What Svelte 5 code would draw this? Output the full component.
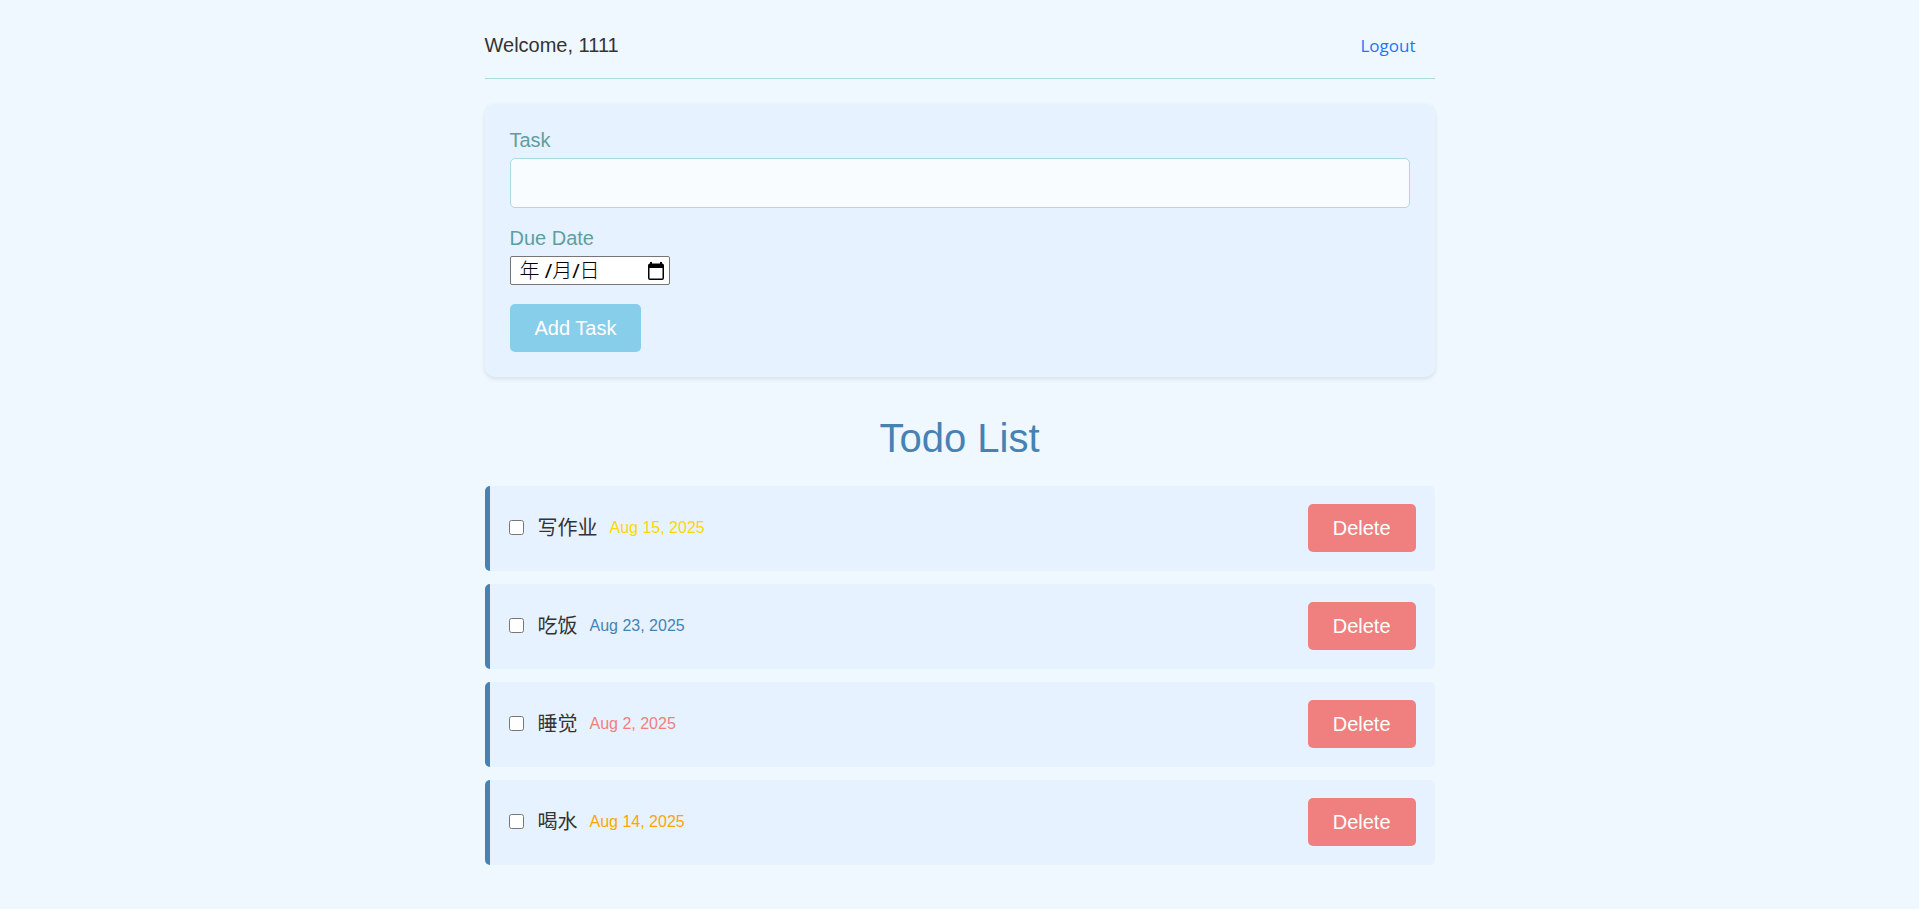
<script>
  let task = $state('');
  let due = $state('年 /月/日');
  let todos = $state([
    { id: 1, title: '写作业', date: 'Aug 15, 2025', urgency: 'soon', done: false },
    { id: 2, title: '吃饭', date: 'Aug 23, 2025', urgency: 'later', done: false },
    { id: 3, title: '睡觉', date: 'Aug 2, 2025', urgency: 'overdue', done: false },
    { id: 4, title: '喝水', date: 'Aug 14, 2025', urgency: 'today', done: false }
  ]);

  function addTask(event) {
    event.preventDefault();
    if (!task.trim()) return;
    todos.push({ id: Date.now(), title: task, date: due, urgency: 'later', done: false });
    task = '';
  }

  function remove(id) {
    todos = todos.filter((t) => t.id !== id);
  }
</script>

<main class="page">
  <header class="top">
    <span>Welcome, 1111</span>
    <a class="logout" href="#logout">Logout</a>
  </header>

  <form class="card" onsubmit={addTask}>
    <label for="task">Task</label>
    <input id="task" class="task-input" type="text" bind:value={task} />
    <label for="due">Due Date</label>
    <div class="date-field">
      <input id="due" type="text" bind:value={due} />
      <button type="button" class="picker" aria-label="Show date picker">
        <svg width="16" height="18" viewBox="0 0 16 18" aria-hidden="true">
          <path fill="#000" fill-rule="evenodd" d="M2 0h2v1.500h8V0h2v1.500a2 2 0 0 1 2 2V16a2 2 0 0 1-2 2H2a2 2 0 0 1-2-2V3.500a2 2 0 0 1 2-2zM1.500 6v10.500h13V6z" />
        </svg>
      </button>
    </div>
    <button class="btn add" type="submit">Add Task</button>
  </form>

  <h1>Todo List</h1>

  <ul class="list">
    {#each todos as todo (todo.id)}
      <li>
        <input id="todo-{todo.id}" type="checkbox" bind:checked={todo.done} />
        <label for="todo-{todo.id}">{todo.title}</label>
        <span class="date {todo.urgency}">{todo.date}</span>
        <button class="btn delete" type="button" onclick={() => remove(todo.id)}>Delete</button>
      </li>
    {/each}
  </ul>
</main>

<style>
  :global(body) {
    background: #f0f8ff;
  }
  .page {
    box-sizing: border-box;
    max-width: 990px;
    margin: 0 auto;
    padding: 20px;
    font-family: "Liberation Sans", "Noto Sans CJK SC", sans-serif;
    font-size: 20px;
    line-height: 30px;
    color: #333;
  }
  .top {
    display: flex;
    justify-content: space-between;
    align-items: center;
    padding: 10px 0 18px;
    border-bottom: 1px solid #add8e6;
    margin-bottom: 25px;
  }
  .logout {
    margin-right: 19px;
    padding-top: 2px;
    font-family: "Open Sans", "Noto Sans", sans-serif;
    font-size: 17px;
    line-height: 28px;
    color: #1677ff;
    text-decoration: none;
  }
  .card {
    display: flex;
    flex-direction: column;
    align-items: flex-start;
    padding: 21px 25px 25px;
    border-radius: 10px;
    background: #e6f2ff;
    box-shadow: 0 2px 5px rgba(0, 0, 0, 0.1);
  }
  .card label {
    color: #5f9ea0;
    margin-bottom: 3px;
  }
  .task-input {
    box-sizing: border-box;
    width: 100%;
    height: 50px;
    margin: 0 0 15px;
    padding: 12px;
    border: 1px solid #add8e6;
    border-radius: 5px;
    background: #f8fcff;
    font: inherit;
    color: inherit;
  }
  .date-field {
    box-sizing: border-box;
    display: flex;
    align-items: center;
    width: 160px;
    height: 29px;
    margin-bottom: 19px;
    padding: 0 5px 0 9px;
    border: 1px solid #767676;
    border-radius: 2px;
    background: #fff;
  }
  .date-field input {
    flex: 1;
    min-width: 0;
    height: 25px;
    padding: 0 0 2px;
    border: 0;
    outline: 0;
    background: none;
    font-family: "Noto Sans", "Noto Sans CJK SC Light", "Noto Sans CJK SC", sans-serif;
    font-size: 20px;
    color: #000;
  }
  .picker {
    display: flex;
    padding: 0;
    border: 0;
    background: none;
    cursor: pointer;
  }
  .btn {
    height: 48px;
    padding: 0 25px;
    border: 0;
    border-radius: 5px;
    font: inherit;
    color: #fff;
    cursor: pointer;
  }
  .add {
    background: #87ceeb;
  }
  .delete {
    margin-left: auto;
    background: #f08080;
  }
  h1 {
    margin: 31px 0 18px;
    font-size: 40px;
    line-height: 60px;
    font-weight: 400;
    text-align: center;
    color: #4682b4;
  }
  .list {
    display: flex;
    flex-direction: column;
    gap: 13px;
    margin: 0;
    padding: 0;
    list-style: none;
  }
  li {
    display: flex;
    align-items: center;
    min-height: 48px;
    padding: 18px 19px 19px;
    border-left: 5px solid #4682b4;
    border-radius: 5px;
    background: #e6f2ff;
  }
  li input {
    width: 15px;
    height: 15px;
    margin: 0 14px 2px 0;
  }
  .date {
    margin-left: 12px;
    font-size: 16px;
  }
  .soon {
    color: #ffd700;
  }
  .later {
    color: #4682b4;
  }
  .overdue {
    color: #f08080;
  }
  .today {
    color: #ffa500;
  }
</style>
